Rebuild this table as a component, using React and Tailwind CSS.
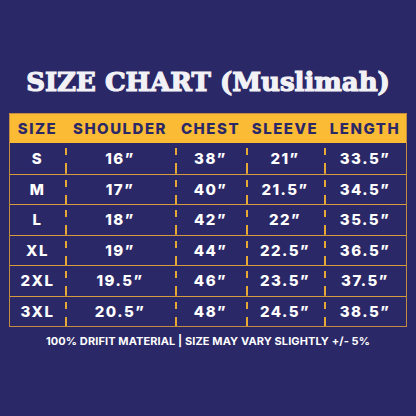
import React from "react";

const rows = [
  ["S", "16”", "38”", "21”", "33.5”"],
  ["M", "17”", "40”", "21.5”", "34.5”"],
  ["L", "18”", "42”", "22”", "35.5”"],
  ["XL", "19”", "44”", "22.5”", "36.5”"],
  ["2XL", "19.5”", "46”", "23.5”", "37.5”"],
  ["3XL", "20.5”", "48”", "24.5”", "38.5”"],
];

const headers = ["SIZE", "SHOULDER", "CHEST", "SLEEVE", "LENGTH"];

const dash =
  "bg-[linear-gradient(to_bottom,transparent_5px,#e6a935_5px,#e6a935_12px,transparent_12px,transparent_20px,#e6a935_20px)] bg-no-repeat bg-[length:2px_100%] bg-left";

export default function App() {
  return (
    <div className="w-[416px] h-[416px] bg-[#2b2868] flex flex-col items-center pt-[66px] overflow-hidden">
      <div
        className="h-[32px] flex items-center justify-center text-[#f2f2f6] font-bold text-[26px] leading-none tracking-[0px] [-webkit-text-stroke:1.2px_#f2f2f6]"
        style={{ fontFamily: '"DejaVu Serif", serif' }}
      >
        SIZE CHART (Muslimah)
      </div>
      <div
        className="mt-[15px] w-[398px] border border-[#c58c40] flex flex-col"
        style={{ fontFamily: 'Inter, "DejaVu Sans", sans-serif' }}
      >
        <div className="h-[29px] bg-[#fbbb34] grid grid-cols-[55px_110px_71px_78px_1fr] items-center text-[#2b2868] font-extrabold text-[15px] tracking-[1.5px] leading-none">
          {headers.map((h) => (
            <div key={h} className="text-center">
              {h}
            </div>
          ))}
        </div>
        {rows.map((r, i) => (
          <div
            key={r[0]}
            className={
              "h-[30.5px] grid grid-cols-[55px_110px_71px_78px_1fr] text-white font-extrabold text-[15px] tracking-[1.5px] leading-none " +
              (i > 0 ? "border-t border-[#d69b3c]" : "")
            }
          >
            {r.map((c, j) => (
              <div
                key={j}
                className={
                  "flex items-center justify-center " + (j > 0 ? dash : "")
                }
              >
                {c}
              </div>
            ))}
          </div>
        ))}
      </div>
      <div
        className="mt-[9px] text-white font-bold text-[11px] tracking-[0.1px] leading-none"
        style={{ fontFamily: 'Inter, "DejaVu Sans", sans-serif' }}
      >
        100% DRIFIT MATERIAL | SIZE MAY VARY SLIGHTLY +/- 5%
      </div>
    </div>
  );
}
